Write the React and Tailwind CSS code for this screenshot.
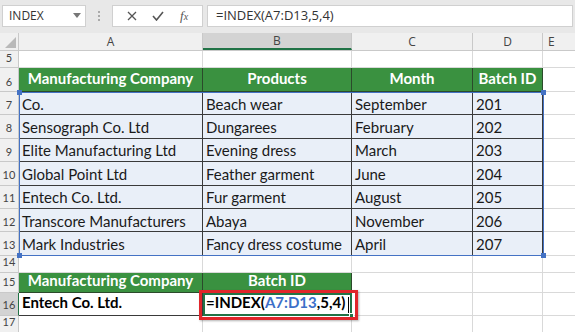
import React from 'react';

const cols = [
  { key: 'A', w: 'w-[184px]' },
  { key: 'B', w: 'w-[149px]' },
  { key: 'C', w: 'w-[121px]' },
  { key: 'D', w: 'w-[70px]' },
];

const data = [
  ['7', 'Co.', 'Beach wear', 'September', '201'],
  ['8', 'Sensograph Co. Ltd', 'Dungarees', 'February', '202'],
  ['9', 'Elite Manufacturing Ltd', 'Evening dress', 'March', '203'],
  ['10', 'Global Point Ltd', 'Feather garment', 'June', '204'],
  ['11', 'Entech Co. Ltd.', 'Fur garment', 'August', '205'],
  ['12', 'Transcore Manufacturers', 'Abaya', 'November', '206'],
  ['13', 'Mark Industries', 'Fancy dress costume', 'April', '207'],
];

const RowHead = ({ n, h, active }) => (
  <div
    className={`${h} w-[19px] shrink-0 flex items-end justify-center pb-[1px] text-[11px] text-[#444] border-r border-b border-[#c9c9c9] ${
      active ? 'bg-[#d3d3d3] border-r-[#217346]' : 'bg-[#f0f0f0]'
    }`}
  >
    {n}
  </div>
);

const Empty = ({ h, w }) => <div className={`${h} ${w} shrink-0 border-r border-b border-[#d9d9d9]`} />;

const EmptyRow = ({ n, h }) => (
  <div className="flex">
    <RowHead n={n} h={h} />
    {cols.map((c) => (
      <Empty key={c.key} h={h} w={c.w} />
    ))}
    <div className={`${h} flex-1 border-b border-[#d9d9d9]`} />
  </div>
);

export default function App() {
  return (
    <div className="w-[575px] h-[332px] overflow-hidden bg-white font-['Lato','Noto_Sans',sans-serif]">
      {/* Formula bar */}
      <div className="h-[31px] bg-[#e8e8e8] flex items-center px-[2px] gap-0 font-['Open_Sans','Noto_Sans',sans-serif] text-[12px] text-[#333]">
        <div className="h-[22px] w-[84px] bg-white border border-[#d0d0d0] flex items-center justify-between pl-[6px] pr-[4px]">
          <span>INDEX</span>
          <svg width="8" height="5" viewBox="0 0 8 5">
            <path d="M0 0h8L4 5z" fill="#777" />
          </svg>
        </div>
        <div className="w-[26px] flex justify-center">
          <div className="flex flex-col gap-[2px]">
            <span className="w-[2px] h-[2px] bg-[#aaa]" />
            <span className="w-[2px] h-[2px] bg-[#aaa]" />
            <span className="w-[2px] h-[2px] bg-[#aaa]" />
          </div>
        </div>
        <div className="h-[22px] w-[91px] bg-white border border-[#d0d0d0] flex items-center justify-around px-[6px]">
          <svg width="10" height="10" viewBox="0 0 10 10">
            <path d="M1 1l8 8M9 1l-8 8" stroke="#555" strokeWidth="1.3" />
          </svg>
          <svg width="12" height="10" viewBox="0 0 12 10">
            <path d="M1 5l3.5 4L11 1" stroke="#555" strokeWidth="1.6" fill="none" />
          </svg>
          <span className="font-['Liberation_Serif',serif] italic text-[13px] text-[#555]">
            f<span className="text-[10px]">x</span>
          </span>
        </div>
        <div className="h-[22px] flex-1 ml-[4px] bg-white border border-[#d0d0d0] flex items-center pl-[8px] text-[13px]">
          =INDEX(A7:D13,5,4)
        </div>
      </div>

      <div className="h-[2px] bg-[#e8e8e8]" />

      {/* Column headers */}
      <div className="flex h-[18px] bg-[#f0f0f0] text-[12px] text-[#444] border-b border-[#c9c9c9] font-['Open_Sans','Noto_Sans',sans-serif]">
        <div className="w-[19px] shrink-0 border-r border-[#c9c9c9] flex items-end justify-end p-[2px]">
          <svg width="11" height="11" viewBox="0 0 11 11">
            <path d="M11 0v11H0z" fill="#b9b9b9" />
          </svg>
        </div>
        {cols.map((c) => (
          <div
            key={c.key}
            className={`${c.w} shrink-0 flex items-center justify-center border-r border-[#c9c9c9] ${
              c.key === 'B' ? 'bg-[#d3d3d3] border-b-2 border-b-[#217346]' : ''
            }`}
          >
            {c.key}
          </div>
        ))}
        <div className="flex-1 flex items-center pl-[5px]">E</div>
      </div>

      <EmptyRow n="5" h="h-[17px]" />

      {/* Header row 6 */}
      <div className="flex">
        <RowHead n="6" h="h-[24px]" />
        {['Manufacturing Company', 'Products', 'Month', 'Batch ID'].map((t, i) => (
          <div
            key={t}
            className={`${cols[i].w} h-[24px] shrink-0 bg-[#3a9140] text-white font-bold text-[15px] flex items-end justify-center pb-[2px] border-r border-b border-[#2b4a2b]`}
          >
            {t}
          </div>
        ))}
        <div className="h-[24px] flex-1 border-b border-[#d9d9d9]" />
      </div>

      {/* Data rows */}
      <div className="relative">
        {data.map((r) => (
          <div key={r[0]} className="flex">
            <RowHead n={r[0]} h="h-[23.4px]" />
            {r.slice(1).map((v, i) => (
              <div
                key={i}
                className={`${cols[i].w} h-[23.4px] shrink-0 bg-[#e9eff8] text-[15px] text-[#1a1a1a] flex items-end pl-[3px] pb-[1px] border-r border-b border-[#3a3a3a] leading-tight`}
              >
                {v}
              </div>
            ))}
            <div className="h-[23.4px] flex-1 border-b border-[#d9d9d9]" />
          </div>
        ))}
        <div className="absolute top-0 left-[19px] w-[525px] bottom-0 border-[1.5px] border-[#4472c4] pointer-events-none">
          <span className="absolute -top-[3px] -left-[3px] w-[5px] h-[5px] bg-[#4472c4]" />
          <span className="absolute -top-[3px] -right-[3px] w-[5px] h-[5px] bg-[#4472c4]" />
          <span className="absolute -bottom-[3px] -left-[3px] w-[5px] h-[5px] bg-[#4472c4]" />
          <span className="absolute -bottom-[3px] -right-[3px] w-[5px] h-[5px] bg-[#4472c4]" />
        </div>
      </div>

      <EmptyRow n="14" h="h-[17px]" />

      {/* Row 15 */}
      <div className="flex">
        <RowHead n="15" h="h-[20px]" />
        {['Manufacturing Company', 'Batch ID'].map((t, i) => (
          <div
            key={t}
            className={`${cols[i].w} h-[20px] shrink-0 bg-[#3a9140] text-white font-bold text-[15px] flex items-end justify-center border-r border-b border-[#2b4a2b]`}
          >
            {t}
          </div>
        ))}
        <Empty h="h-[20px]" w={cols[2].w} />
        <Empty h="h-[20px]" w={cols[3].w} />
        <div className="h-[20px] flex-1 border-b border-[#d9d9d9]" />
      </div>

      {/* Row 16 */}
      <div className="flex">
        <RowHead n="16" h="h-[23px]" active />
        <div className={`${cols[0].w} h-[23px] shrink-0 font-bold text-[15px] text-black flex items-end pl-[3px] pb-[1px] border-r border-b border-[#3a3a3a]`}>
          Entech Co. Ltd.
        </div>
        <div className={`${cols[1].w} h-[23px] shrink-0 relative`}>
          <div className="absolute inset-0 border-2 border-[#217346] font-bold text-[15px] text-black flex items-end pl-[1px]">
            <span>=INDEX(</span>
            <span className="text-[#3c6fc8]">A7:D13</span>
            <span>,5,4)</span>
            <span className="w-[1px] h-[16px] bg-black ml-[3px] mb-[1px]" />
          </div>
          <span className="absolute -bottom-[2px] -right-[2px] w-[5px] h-[5px] bg-[#217346] border border-white" />
          <div className="absolute -top-[3px] -left-[4px] -right-[6px] -bottom-[4px] border-[3px] border-[#e0262b] shadow-[1px_1px_2px_rgba(0,0,0,0.3)]" />
        </div>
        <Empty h="h-[23px]" w={cols[2].w} />
        <Empty h="h-[23px]" w={cols[3].w} />
        <div className="h-[23px] flex-1 border-b border-[#d9d9d9]" />
      </div>

      <EmptyRow n="17" h="h-[17px]" />
    </div>
  );
}
